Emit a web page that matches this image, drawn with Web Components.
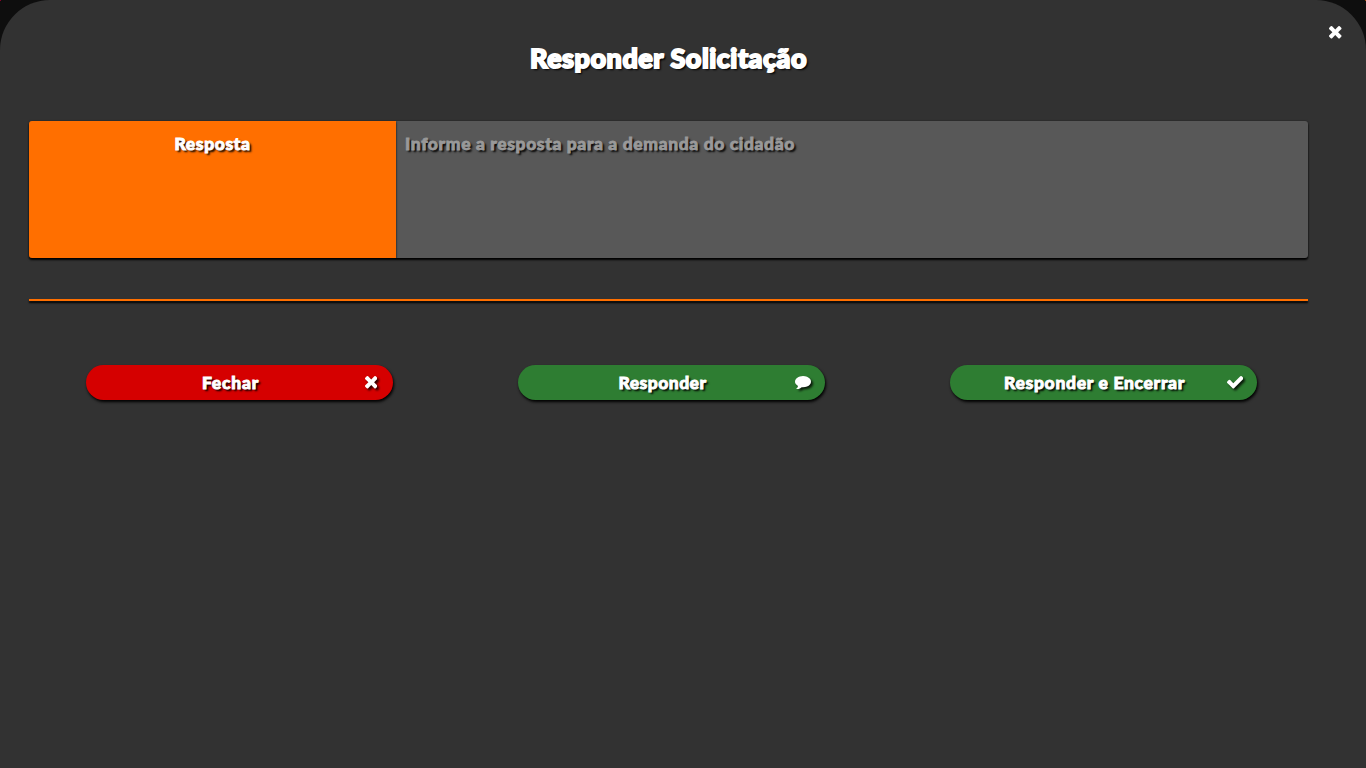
<!DOCTYPE html>
<html lang="pt-BR">
<head>
<meta charset="utf-8">
<title>Responder Solicitação</title>
<style>
html, body { margin: 0; height: 100%; overflow: hidden; background: #0e0e0e; }
body { font-family: Lato, "Open Sans", sans-serif; font-weight: 900; color: #fff; }
</style>
</head>
<body>
<reply-dialog></reply-dialog>
<script>
const ICONS = {
  times: ['302 366 1188 1188', 'M1490 1322q0 40-28 68l-136 136q-28 28-68 28t-68-28l-294-294-294 294q-28 28-68 28t-68-28l-136-136q-28-28-28-68t28-68l294-294-294-294q-28-28-28-68t28-68l136-136q28-28 68-28t68 28l294 294 294-294q28-28 68-28t68 28l136 136q28 28 28 68t-28 68l-294 294 294 294q28 28 28 68z', 12.5, 12.5],
  check: ['121 334 1550 1188', 'M1671 566q0 40-28 68l-724 724-136 136q-28 28-68 28t-68-28l-136-136-362-362q-28-28-28-68t28-68l136-136q28-28 68-28t68 28l294 295 656-657q28-28 68-28t68 28l136 136q28 28 28 68z', 16.5, 12.5],
  comment: ['0 256 1792 1536', 'M1792 896q0 174-120 321.5t-326 233-450 85.5q-70 0-145-8-198 175-460 242-49 14-114 22-17 2-30.5-9t-17.5-29v-1q-3-4-.5-12t2-10 4.5-9.5l6-9 7-8.5 8-9q7-8 31-34.5t34.5-38 31-39.5 32.5-51 27-59 26-76q-157-89-247.5-220t-90.5-281q0-130 71-248.5t191-204.5 286-136.5 348-50.5q244 0 450 85.5t326 233 120 321.5z', 16, 13.5]
};

class UiIcon extends HTMLElement {
  connectedCallback() {
    const [box, path, w, h] = ICONS[this.getAttribute('name')];
    this.attachShadow({ mode: 'open' }).innerHTML = `
      <style>:host{display:block;width:${w}px;height:${h}px;filter:drop-shadow(2px 2px 1px rgba(0,0,0,.8))}
      :host([flat]){filter:none}
      svg{display:block;width:100%;height:100%}</style>
      <svg viewBox="${box}" preserveAspectRatio="none" fill="currentColor"><path d="${path}"/></svg>`;
  }
}
customElements.define('ui-icon', UiIcon);

/* Tracks its text so that it fills the width given in the attribute. */
class FitText extends HTMLElement {
  connectedCallback() {
    this.attachShadow({ mode: 'open' }).innerHTML = `
      <style>:host{display:inline-block;white-space:nowrap;-webkit-text-stroke:var(--stroke,.9px) currentColor;stroke-linejoin:round;
      text-shadow:2px 2px 2px #000}span{display:inline-block}</style><span><slot></slot></span>`;
    const span = this.shadowRoot.querySelector('span');
    const target = +this.getAttribute('width');
    const gap = (target - span.getBoundingClientRect().width) / this.textContent.length;
    span.style.letterSpacing = gap + 'px';
    this.style.width = target + 'px';
  }
}
customElements.define('fit-text', FitText);

class PillButton extends HTMLElement {
  connectedCallback() {
    this.attachShadow({ mode: 'open' }).innerHTML = `
      <style>:host{display:block}
      button{all:unset;box-sizing:border-box;display:grid;grid-template-columns:1fr 17px;align-items:center;width:307px;height:35px;
      padding:0 13.5px 0 12.5px;border-radius:18px;background:var(--fill);box-shadow:1px 2px 3px #000;font-size:17.5px;line-height:35px}
      .label{text-align:center}
      .icon{display:grid;place-items:center}</style>
      <button><span class="label"><slot></slot></span><span class="icon"><ui-icon name="${this.getAttribute('icon')}"></ui-icon></span></button>`;
  }
}
customElements.define('pill-button', PillButton);

class AnswerField extends HTMLElement {
  connectedCallback() {
    this.attachShadow({ mode: 'open' }).innerHTML = `
      <style>:host{display:grid;grid-template-columns:367px 1fr;height:137px;border-radius:3px;overflow:hidden;background:#585858;
      box-shadow:0 2px 2px #000,0 0 2px rgba(0,0,0,.4);font-size:17.5px;line-height:24px}
      .label{background:#ff6f00;text-align:center;padding-top:11px;box-shadow:0 1px 2px #000}
      .input{padding:11px 9px;color:#999;--stroke:.8px}</style>
      <div class="label"><slot name="label"></slot></div><div class="input"><slot></slot></div>`;
  }
}
customElements.define('answer-field', AnswerField);

class ReplyDialog extends HTMLElement {
  connectedCallback() {
    this.attachShadow({ mode: 'open' }).innerHTML = `
      <style>
      :host{display:block;height:100vh;background:linear-gradient(#870029,#870029) 0 0/1px 1px no-repeat,linear-gradient(#9c4a06,#9c4a06) 100% 0/1px 1px no-repeat,#0e0e0e}
      .panel{position:relative;box-sizing:border-box;height:100%;display:flex;flex-direction:column;padding:39px 58px 0 29px;
      background:#323232;border-radius:50px 50px 0 0}
      .close{position:absolute;top:26px;right:24.5px}
      h1{margin:0;height:82px;text-align:center;font-size:27px;line-height:38px;font-weight:900;--stroke:1.9px}
      hr{box-sizing:border-box;width:100%;height:2px;margin:41px 0 64px;border:0;background:#ff6f00;box-shadow:0 2px 2px #000}
      .actions{display:grid;grid-template-columns:repeat(3,307px);column-gap:125px;padding-left:57px}
      </style>
      <section class="panel">
        <ui-icon class="close" name="times" flat></ui-icon>
        <h1><fit-text width="277">Responder Solicitação</fit-text></h1>
        <answer-field><fit-text slot="label" width="76">Resposta</fit-text><fit-text width="390">Informe a resposta para a demanda do cidadão</fit-text></answer-field>
        <hr>
        <div class="actions">
          <pill-button icon="times" style="--fill:#d50000"><fit-text width="57">Fechar</fit-text></pill-button>
          <pill-button icon="comment" style="--fill:#2e7d32"><fit-text width="88">Responder</fit-text></pill-button>
          <pill-button icon="check" style="--fill:#2e7d32"><fit-text width="181">Responder e Encerrar</fit-text></pill-button>
        </div>
      </section>`;
  }
}
customElements.define('reply-dialog', ReplyDialog);
</script>
</body>
</html>
